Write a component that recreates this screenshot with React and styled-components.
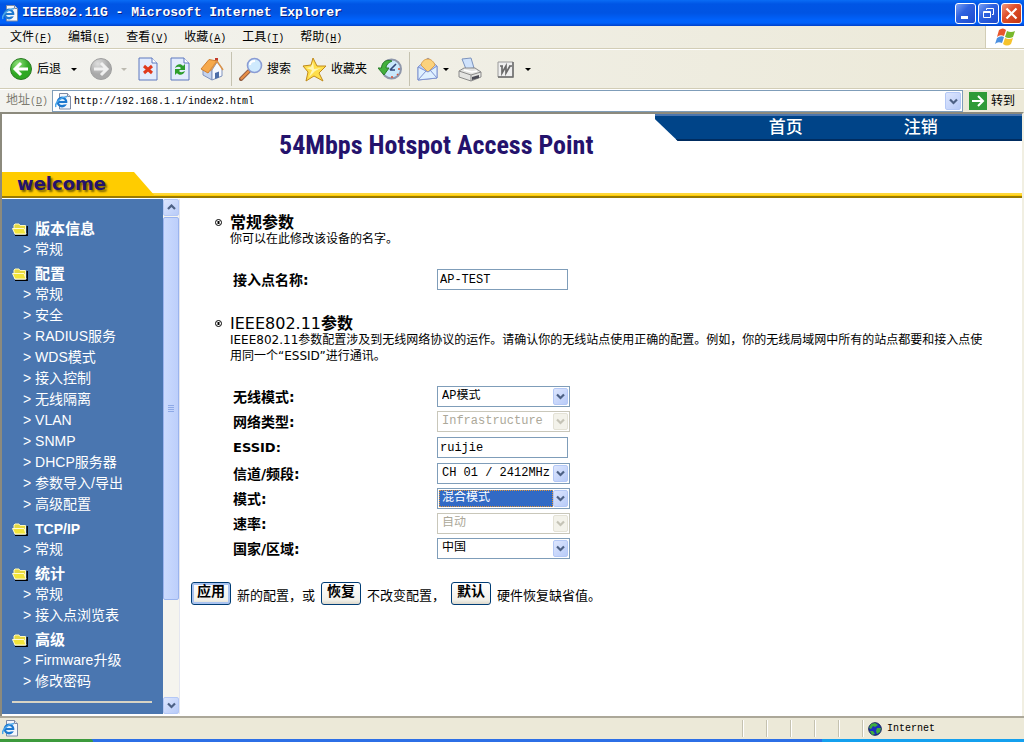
import React, { useState } from 'react';
import styled, { createGlobalStyle, css } from 'styled-components';

const GlobalStyle = createGlobalStyle`
  * {
    box-sizing: border-box;
  }

  body {
    margin: 0;
    background: #ece9d8;
    color: #000;
    font-family: 'DejaVu Sans', 'Noto Sans CJK SC', sans-serif;
    font-size: 12px;
  }

  button, input, select {
    margin: 0;
    font-family: inherit;
  }
`;

const Window = styled.div`
  display: flex;
  flex-direction: column;
  min-height: 100vh;
`;

/* ---------- title bar ---------- */

const TitleBar = styled.header`
  display: flex;
  align-items: center;
  height: 26px;
  padding: 0 2px;
  gap: 3px;
  background: linear-gradient(#0a6cf5 0, #0055e5 4px, #0054e3 13px, #0062fc 20px, #0061fa 23px, #0040c8 26px);
`;

const Title = styled.h1`
  flex: 1;
  margin: 0;
  color: #fff;
  font: bold 13px/24px 'Liberation Mono', monospace;
  text-shadow: 1px 1px 0 #0a1f83;
  white-space: nowrap;
`;

const WindowButtons = styled.div`
  display: flex;
  gap: 2px;
`;

const WindowButton = styled.button`
  display: flex;
  align-items: center;
  justify-content: center;
  width: 21px;
  height: 21px;
  padding: 0;
  border: 1px solid #fff;
  border-radius: 3px;
  background: ${({ $close }) =>
    $close
      ? 'linear-gradient(135deg, #ee9a80, #e0502c 40%, #c23612)'
      : 'linear-gradient(135deg, #7ba0f4, #2f62e0 40%, #1d4bce)'};
`;

/* ---------- menu and tool bars ---------- */

const MenuBar = styled.nav`
  display: flex;
  height: 23px;
  border-bottom: 1px solid #d2cdb6;
  background: linear-gradient(90deg, #f3f3ef, #ece9d8);
`;

const MenuList = styled.div`
  display: flex;
  flex: 1;
  align-items: center;
  gap: 16px;
  padding: 2px 10px 0;
`;

const MenuItem = styled.button`
  padding: 0;
  border: 0;
  background: none;
  color: #000;
  font: 12px/18px 'Liberation Mono', 'Noto Sans CJK SC', monospace;
  white-space: nowrap;
`;

const Mnemonic = styled.span`
  font-size: 10px;
`;

const Throbber = styled.div`
  display: flex;
  align-items: center;
  justify-content: center;
  width: 39px;
  border-left: 1px solid #d2cdb6;
  background: #fff;
`;

const ToolBar = styled.div`
  display: flex;
  align-items: center;
  height: 40px;
  padding: 0 9px;
  border-top: 1px solid #fff;
  border-bottom: 1px solid #d2cdb6;
  background: linear-gradient(90deg, #f3f3ef, #ece9d8);
`;

const ToolButton = styled.button`
  display: flex;
  flex: none;
  align-items: center;
  gap: 4px;
  width: ${({ $width }) => $width}px;
  padding: 0;
  border: 0;
  background: none;
  color: #000;
  font-size: 12px;
  line-height: 18px;
  white-space: nowrap;
`;

const Divider = styled.span`
  width: 1px;
  height: 34px;
  margin-right: 7px;
  background: #c5c2b0;
`;

const DropMark = styled.span`
  margin-left: ${({ $gap }) => $gap || 0}px;
  border: 3px solid transparent;
  border-bottom-width: 0;
  border-top-color: ${({ $muted }) => ($muted ? '#bcbab0' : '#000')};
`;

const AddressBar = styled.form`
  display: flex;
  align-items: center;
  height: 23px;
  padding-left: 6px;
  border-top: 1px solid #fff;
  background: linear-gradient(90deg, #f3f3ef, #ece9d8);
`;

const AddressLabel = styled.label`
  width: 46px;
  color: #7d7b70;
  font: 12px/18px 'Liberation Mono', 'Noto Sans CJK SC', monospace;
  white-space: nowrap;
`;

const AddressBox = styled.div`
  display: flex;
  flex: 1;
  align-items: center;
  height: 22px;
  padding: 1px 1px 1px 2px;
  gap: 2px;
  border: 1px solid #7f9db9;
  background: #fff;
`;

const AddressInput = styled.input`
  flex: 1;
  min-width: 0;
  padding: 2px 0 0;
  border: 0;
  outline: 0;
  background: none;
  font: 10px/16px 'Liberation Mono', monospace;
`;

const GoButton = styled.button`
  display: flex;
  align-items: center;
  gap: 4px;
  width: 61px;
  padding: 0 0 0 6px;
  border: 0;
  background: none;
  color: #000;
  font-size: 12px;
  line-height: 18px;
  white-space: nowrap;
`;

/* ---------- page ---------- */

const Page = styled.div`
  display: flex;
  flex: 1;
  flex-direction: column;
  min-height: 0;
  border: solid #8c8a7d;
  border-width: 2px 0 0 2px;
  border-right: 2px solid #f1efe2;
  background: #fff;
`;

const Banner = styled.header`
  display: flex;
  flex-wrap: wrap;
  align-items: flex-start;
  height: 84px;
  background: linear-gradient(#ffd83c 0, #ffd83c 2px, #fc0 2px, #fc0 3px, #997a00 3px) bottom / 100% 5px no-repeat;
`;

const BannerTitle = styled.h2`
  flex: 1;
  margin: 0;
  padding: 15px 0 0 277px;
  color: #24126c;
  font: bold 26px/32px 'Liberation Sans Narrow', 'Roboto Condensed', 'Liberation Sans', sans-serif;
  white-space: nowrap;
`;

const TopNav = styled.nav`
  display: flex;
  flex: 0 0 36%;
  gap: 101px;
  height: 27px;
  padding-left: 114px;
  border-top: 2px solid #4a76b0;
  border-bottom: 2px solid #002c60;
  background: #048;
  clip-path: polygon(0 0, 100% 0, 100% 100%, 23px 100%, 0 5px);
`;

const TopLink = styled.a`
  color: #fff;
  font-size: 17px;
  font-weight: 500;
  line-height: 22px;
  text-decoration: none;
`;

const WelcomeTab = styled.div`
  flex: 0 0 153px;
  align-self: flex-end;
  height: 24px;
  margin-bottom: 2px;
  padding-left: 15px;
  background: #fc0;
  color: #24126c;
  font: bold 18px/24px 'DejaVu Sans', sans-serif;
  text-shadow: 2px 2px 2px #7a6200;
  clip-path: polygon(0 0, 132px 0, 100% 100%, 0 100%);
`;

const Columns = styled.div`
  display: flex;
  flex: 1;
  min-height: 0;
  padding: 1px 0 2px;
`;

const SideBar = styled.nav`
  width: 161px;
  padding: 16px 11px 11px 10px;
  overflow: hidden;
  background: #4a76b0;
  color: #fff;
  font-family: 'Liberation Sans', 'Noto Sans CJK SC', sans-serif;
`;

const SideHeading = styled.h3`
  display: flex;
  align-items: center;
  gap: 7px;
  height: 20px;
  margin: 4px 0 0;
  font-size: ${({ $latin }) => ($latin ? 14 : 15)}px;
  line-height: 20px;
`;

const SideList = styled.ul`
  margin: 0;
  padding: 0;
  list-style: none;
`;

const SideItem = styled.li`
  height: 21px;
  padding-left: 11px;
  font-size: 14px;
  line-height: 21px;
  white-space: nowrap;
`;

const SideLink = styled.a`
  color: #fff;
  text-decoration: none;
`;

const SideRule = styled.hr`
  height: 2px;
  margin: 9px 0 0;
  border: 0;
  background: #d8d4c4;
`;

const ScrollBar = styled.div`
  display: flex;
  flex-direction: column;
  width: 17px;
  border-right: 1px solid #e4e6f0;
  background: #f5f4ee;
`;

const ScrollTrack = styled.div`
  display: flex;
  flex: 1;
  flex-direction: column;
  padding: 1px 0;
`;

const ScrollThumb = styled.div`
  display: flex;
  flex: 0 0 80%;
  align-items: center;
  justify-content: center;
  border: 1px solid #9bb4ee;
  border-radius: 2px;
  background: linear-gradient(90deg, #cbdafd, #bdcffb);
`;

const ArrowCell = styled.button`
  display: flex;
  flex: none;
  align-items: center;
  justify-content: center;
  width: ${({ $wide }) => ($wide ? 16 : 15)}px;
  height: ${({ $height }) => $height || 17}px;
  padding: 0;
  border: 1px solid ${({ disabled }) => (disabled ? '#e4e2d6' : '#b4c8f6')};
  border-radius: 2px;
  background: ${({ disabled }) => (disabled ? '#f3f2ea' : 'linear-gradient(135deg, #dde6fe, #b8cbf8)')};
  color: ${({ disabled }) => (disabled ? '#c5c3b6' : '#4d6185')};
`;

/* ---------- settings form ---------- */

const Settings = styled.form`
  flex: 1;
  min-width: 0;
  padding: 15px 32px 0 11px;
`;

const Section = styled.section`
  padding-left: 39px;
`;

const SectionTitle = styled.h3`
  display: flex;
  align-items: center;
  gap: 8px;
  margin: 0 0 0 -15px;
  font-size: 16px;
  font-weight: ${({ $regular }) => ($regular ? 400 : 700)};
  line-height: 17px;
`;

const Note = styled.p`
  margin: 0;
  font-size: 12px;
  line-height: 16px;
`;

const Fields = styled.div`
  padding: ${({ $top }) => $top}px 0 ${({ $bottom }) => $bottom}px 3px;
`;

const Field = styled.div`
  display: flex;
  align-items: center;
  height: ${({ $tall }) => ($tall ? 27 : 25)}px;
`;

const FieldLabel = styled.label`
  width: 204px;
  font-size: ${({ $latin }) => ($latin ? 13 : 14)}px;
  font-weight: 700;
  line-height: 20px;
`;

const controlFont = css`
  font: 12px/15px 'Liberation Mono', 'Noto Sans CJK SC', monospace;
`;

const TextBox = styled.input`
  width: 131px;
  height: 21px;
  padding: 0 2px;
  border: 1px solid #7f9db9;
  background: #fff;
  ${controlFont}
`;

const SelectFrame = styled.div`
  display: flex;
  align-items: center;
  width: 133px;
  height: 21px;
  padding: 1px;
  border: 1px solid ${({ $disabled }) => ($disabled ? '#c9c7ba' : '#7f9db9')};
  background: #fff;
`;

const SelectBox = styled.select`
  flex: 1;
  min-width: 0;
  height: 17px;
  padding: 0 0 0 3px;
  appearance: none;
  border: 0;
  border-radius: 0;
  outline: 0;
  background: ${({ $active }) => ($active ? '#316ac5' : '#fff')};
  color: ${({ $active }) => ($active ? '#fff' : '#000')};
  ${controlFont}

  ${({ $active }) => $active && css`
    outline: 1px dotted #e0953a;
    outline-offset: -1px;
  `}

  &:disabled {
    color: #aca899;
    opacity: 1;
  }
`;

const Actions = styled.div`
  display: flex;
  align-items: center;
  gap: 6px;
  font-size: 13px;
  line-height: 20px;
  white-space: nowrap;
`;

const ActionText = styled.span`
  padding-top: 6px;
`;

const ActionButton = styled.button`
  width: 40px;
  height: 23px;
  padding: 0 0 4px;
  border: 1px solid #003c74;
  border-radius: 3px;
  background: linear-gradient(#fff, #f2f1ea 80%, #dcd8cc);
  box-shadow: ${({ $primary }) => ($primary ? 'inset 0 0 0 2px #a9c3f0' : 'none')};
  color: #000;
  font-size: 14px;
  font-weight: 700;
  line-height: 16px;
`;

/* ---------- status bar ---------- */

const StatusBar = styled.footer`
  display: flex;
  align-items: center;
  height: 23px;
  border-top: 2px solid #aca899;
  background: #ece9d8;
`;

const StatusText = styled.div`
  flex: 1;
  padding-left: 2px;
  line-height: 0;
`;

const StatusCell = styled.div`
  display: flex;
  align-items: center;
  gap: 5px;
  width: ${({ $width }) => $width || 24}px;
  height: 17px;
  padding-left: 5px;
  border-left: 1px solid #c5c2b0;
  box-shadow: inset 1px 0 0 #fff;
  font: 10px/16px 'Liberation Mono', monospace;
`;

const TaskBar = styled.div`
  display: flex;
  height: 3px;
  background: #2c6fe6;
`;

const TaskStart = styled.div`
  width: 93px;
  border-radius: 0 3px 0 0;
  background: #3c9a3c;
`;

const TaskTray = styled.div`
  flex: 0 0 202px;
  margin-left: auto;
  background: #14a0ee;
`;

/* ---------- drawings ---------- */

const IeIcon = () => (
  <svg width="17" height="17" viewBox="0 0 17 17">
    <path d="M4.500 .5h8l3 3v12.500h-11z" fill="#f4f6fb" stroke="#7d8aa5" />
    <path d="M12.500 .5v3h3" fill="#dce3ef" stroke="#7d8aa5" />
    <circle cx="7" cy="9" r="4.200" fill="#e6f3fd" stroke="#1e78cf" strokeWidth="2.400" />
    <path d="M4 9h7" stroke="#1e78cf" strokeWidth="2" />
    <path d="M9 10.700h4" stroke="#f4f6fb" strokeWidth="1.400" />
    <path d="M1 14C-1 10 6 4 12 3.500" fill="none" stroke="#4aa6ea" strokeWidth="1.500" />
  </svg>
);

const Chevron = ({ up }) => (
  <svg width="9" height="7" viewBox="0 0 9 7">
    <path d={up ? 'M1 5l3.500-3.500L8 5' : 'M1 1.500L4.500 5 8 1.500'} fill="none" stroke="currentColor" strokeWidth="2.200" />
  </svg>
);

const RoundArrow = ({ muted }) => (
  <svg width="24" height="24" viewBox="0 0 24 24">
    <defs>
      <radialGradient id={muted ? 'fwd' : 'back'} cx="35%" cy="25%">
        <stop offset="0" stopColor={muted ? '#dedede' : '#8fe07a'} />
        <stop offset="1" stopColor={muted ? '#a9a9a9' : '#2fa824'} />
      </radialGradient>
    </defs>
    <circle cx="12" cy="12" r="10.500" fill={`url(#${muted ? 'fwd' : 'back'})`} stroke={muted ? '#a0a0a0' : '#2c7a25'} />
    <path
      d={muted ? 'M5 12h12M12 6l6 6-6 6' : 'M19 12H7M12 6l-6 6 6 6'}
      fill="none"
      stroke={muted ? '#f0f0f0' : '#fff'}
      strokeWidth="3"
    />
  </svg>
);

const SheetIcon = ({ children }) => (
  <svg width="20" height="24" viewBox="0 0 20 24">
    <path d="M1 1h13l5 5v17H1z" fill="#e3ecfd" stroke="#5f78be" />
    <path d="M14 1v5h5" fill="#fff" stroke="#5f78be" />
    {children}
  </svg>
);

const HomeIcon = () => (
  <svg width="24" height="24" viewBox="0 0 24 24">
    <path d="M15 1h3v6h-3z" fill="#c23a2a" />
    <path d="M3 12v6l9 5V13l-5-3z" fill="#c4d3ee" stroke="#8093bd" />
    <path d="M12 13v10l10-4v-8l-5-6z" fill="#f6f9ff" stroke="#8093bd" />
    <path d="M1 12L9 2.500 17 4l-6 8-3 4z" fill="#f6a94c" stroke="#d07f30" />
    <path d="M10 14l7-10 6 9" fill="none" stroke="#dc9348" strokeWidth="1.500" />
    <path d="M15 16l4-1.500v6L15 22z" fill="#4d6ea8" />
  </svg>
);

const SearchIcon = () => (
  <svg width="24" height="24" viewBox="0 0 24 24">
    <path d="M2 22l8-8" stroke="#8f5a40" strokeWidth="4" strokeLinecap="round" />
    <path d="M2.500 21.500l7-7" stroke="#e88f45" strokeWidth="2.400" strokeLinecap="round" />
    <circle cx="15.500" cy="8.500" r="7" fill="#cfeafd" stroke="#8a9cd4" strokeWidth="1.600" />
    <path d="M11 8c0-3 2-4 5-4" fill="none" stroke="#fff" strokeWidth="2" />
  </svg>
);

const StarIcon = () => (
  <svg width="25" height="25" viewBox="0 0 25 25">
    <path d="M11 1l4 8 9 0-7 7 4 8-9-5-8 5 2-9-5-6 8-1z" fill="#ffdf4a" stroke="#c08a1c" strokeLinejoin="round" />
    <path d="M11 5l1 7 7-1-6 3-6 6 3-7-6-2 5-1z" fill="#fff6b4" />
  </svg>
);

const HistoryIcon = () => (
  <svg width="24" height="24" viewBox="0 0 24 24">
    <circle cx="13.500" cy="12" r="9.500" fill="#c9e8fb" stroke="#8f97ab" strokeWidth="2" />
    <path d="M12 13l6-6M12 13h5" stroke="#33487a" strokeWidth="1.600" />
    <path d="M20 12h2M14 19v2M19 17l1 1" stroke="#e05030" strokeWidth="1.500" />
    <path d="M14 4C8 2 4 5 3.500 11H0l6 7 5-7H8c0-3 2-5 6-7z" fill="#43b13c" stroke="#2b7f2a" />
  </svg>
);

const MailIcon = () => (
  <svg width="22" height="24" viewBox="0 0 22 24">
    <path d="M1 10L11 1l9 8v12L1 23z" fill="#b7cdf5" stroke="#7f93d0" />
    <path d="M4 8c1-4 4-6 7-6s6 3 7 6l-7 7z" fill="#fbd27c" stroke="#dfa24a" />
    <path d="M1 10l10 5 9-6v12L1 23z" fill="#dff0ff" stroke="#7f93d0" />
    <path d="M1 23l8-9M20 21l-7-8" stroke="#7f93d0" />
  </svg>
);

const PrinterIcon = () => (
  <svg width="24" height="25" viewBox="0 0 24 25">
    <path d="M4 2l9-1 3 10-8 1z" fill="#cfe2fb" stroke="#7c93bd" />
    <path d="M1 14l5-3h11l6 4v5l-10 4-12-4z" fill="#e4e4e2" stroke="#8a8a8a" />
    <path d="M1 14l12 4 10-3M13 18v6" fill="none" stroke="#8a8a8a" />
    <path d="M14 20l7-2v3l-7 2z" fill="#4d4d57" />
    <path d="M6 13l8 2 5-1" fill="none" stroke="#fff" strokeWidth="1.500" />
  </svg>
);

const EditIcon = () => (
  <svg width="17" height="17" viewBox="0 0 17 17">
    <path d="M1 1h15v15H1z" fill="#efefef" stroke="#9a9a9a" />
    <path d="M16 1v15H1" fill="none" stroke="#6c6c6c" strokeWidth="1.500" />
    <path d="M3 5h3M5 5l0 7 4-7 0 7 4-7M12 5h3" fill="none" stroke="#6a6a6a" strokeWidth="1.700" />
  </svg>
);

const FolderIcon = () => (
  <svg width="16" height="13" viewBox="0 0 16 13">
    <path d="M3 12.300h12.200V3" fill="none" stroke="#000" strokeWidth="1.400" />
    <path d="M2 5V2l1-1h4l1 1.500h5.500V11H3z" fill="#e6d940" stroke="#fff9c0" />
    <path d="M.5 5.500h11.500l2 5.500H3z" fill="#f2e53a" stroke="#fffbd0" />
  </svg>
);

const Bullet = () => (
  <svg width="7" height="7" viewBox="0 0 7 7">
    <circle cx="3.500" cy="3.500" r="3" fill="#fff" stroke="#000" />
    <rect x="2.500" y="2" width="2" height="3" fill="#000" />
  </svg>
);

const FlagIcon = () => (
  <svg width="21" height="19" viewBox="0 0 21 19">
    <path d="M4 2q4-3 7 0L9 8q-4-2-7 1z" fill="#e8562c" />
    <path d="M12 3q4 2 8 0l-2 6q-4 2-8 0z" fill="#78b82c" />
    <path d="M2 10q4-3 7-1l-2 6q-4-2-7 1z" fill="#4a8fe0" />
    <path d="M10 10q4 2 8 0l-2 6q-4 3-8 0z" fill="#f6c32c" />
  </svg>
);

const GlobeIcon = () => (
  <svg width="14" height="14" viewBox="0 0 14 14">
    <circle cx="7" cy="7" r="6.300" fill="#1c2fbe" stroke="#102050" />
    <path d="M3 2l4-1 3 2-3 2-2-1-2 3-2-1zM9 6l4 0-1 4-3 2-1-3zM2 9l3 0 2 3-3 1z" fill="#3fae3c" />
  </svg>
);

/* ---------- data ---------- */

const menus = [
  ['文件', 'F'],
  ['编辑', 'E'],
  ['查看', 'V'],
  ['收藏', 'A'],
  ['工具', 'T'],
  ['帮助', 'H'],
];

const sideMenu = [
  { title: '版本信息', items: ['常规'] },
  {
    title: '配置',
    items: [
      '常规', '安全', 'RADIUS服务', 'WDS模式', '接入控制', '无线隔离',
      'VLAN', 'SNMP', 'DHCP服务器', '参数导入/导出', '高级配置',
    ],
  },
  { title: 'TCP/IP', latin: true, items: ['常规'] },
  { title: '统计', items: ['常规', '接入点浏览表'] },
  { title: '高级', items: ['Firmware升级', '修改密码'] },
];

const fields = [
  { id: 'wireless', label: '无线模式:', options: ['AP模式'] },
  { id: 'network', label: '网络类型:', options: ['Infrastructure'], disabled: true },
  { id: 'essid', label: 'ESSID:', latin: true },
  { id: 'channel', label: '信道/频段:', options: ['CH 01 / 2412MHz'] },
  { id: 'mode', label: '模式:', options: ['混合模式'], active: true },
  { id: 'rate', label: '速率:', options: ['自动'], disabled: true },
  { id: 'region', label: '国家/区域:', options: ['中国'] },
];

const App = () => {
  const [address, setAddress] = useState('http://192.168.1.1/index2.html');
  const [name, setName] = useState('AP-TEST');
  const [essid, setEssid] = useState('ruijie');

  const handleSubmit = (e) => {
    e.preventDefault();
  };

  return (
    <Window>
      <GlobalStyle />
      <TitleBar>
        <IeIcon />
        <Title>IEEE802.11G - Microsoft Internet Explorer</Title>
        <WindowButtons>
          <WindowButton aria-label="最小化">
            <svg width="15" height="15"><path d="M3 11.500h7" stroke="#fff" strokeWidth="3" /></svg>
          </WindowButton>
          <WindowButton aria-label="还原">
            <svg width="15" height="15">
              <path d="M5.500 4V2.500h7v6H11" fill="none" stroke="#fff" />
              <path d="M2.500 5.500h7v6h-7zM2 6.500h8" fill="none" stroke="#fff" />
            </svg>
          </WindowButton>
          <WindowButton $close aria-label="关闭">
            <svg width="15" height="15"><path d="M2.500 2.500l10 10M12.500 2.500l-10 10" stroke="#fff" strokeWidth="2.200" /></svg>
          </WindowButton>
        </WindowButtons>
      </TitleBar>

      <MenuBar>
        <MenuList>
          {menus.map(([label, key]) => (
            <MenuItem key={key}>
              {label}
              <Mnemonic>(<u>{key}</u>)</Mnemonic>
            </MenuItem>
          ))}
        </MenuList>
        <Throbber><FlagIcon /></Throbber>
      </MenuBar>

      <ToolBar>
        <ToolButton $width={80}><RoundArrow />后退<DropMark $gap={6} /></ToolButton>
        <ToolButton $width={49} aria-label="前进"><RoundArrow muted /><DropMark $gap={4} $muted /></ToolButton>
        <ToolButton $width={32} aria-label="停止">
          <SheetIcon><path d="M6 9l8 7M14 9l-8 7" stroke="#e0391c" strokeWidth="3" /></SheetIcon>
        </ToolButton>
        <ToolButton $width={30} aria-label="刷新">
          <SheetIcon>
            <path d="M5 11c1-4 6-5 8-2l2-2v6h-6l2-2c-2-2-4-1-6 0z" fill="#2d9e2d" />
            <path d="M15 14c-1 4-6 5-8 2l-2 2v-6h6l-2 2c2 2 4 1 6 0z" fill="#2d9e2d" />
          </SheetIcon>
        </ToolButton>
        <ToolButton $width={31} aria-label="主页"><HomeIcon /></ToolButton>
        <Divider />
        <ToolButton $width={63}><SearchIcon />搜索</ToolButton>
        <ToolButton $width={76}><StarIcon />收藏夹</ToolButton>
        <ToolButton $width={31} aria-label="历史"><HistoryIcon /></ToolButton>
        <Divider />
        <ToolButton $width={41} aria-label="邮件"><MailIcon /><DropMark /></ToolButton>
        <ToolButton $width={39} aria-label="打印"><PrinterIcon /></ToolButton>
        <ToolButton $width={40} aria-label="编辑"><EditIcon /><DropMark $gap={7} /></ToolButton>
      </ToolBar>

      <AddressBar onSubmit={handleSubmit}>
        <AddressLabel htmlFor="address">地址<Mnemonic>(<u>D</u>)</Mnemonic></AddressLabel>
        <AddressBox>
          <IeIcon />
          <AddressInput id="address" value={address} onChange={(e) => setAddress(e.target.value)} />
          <ArrowCell type="button" $wide $height={18} aria-label="地址列表"><Chevron /></ArrowCell>
        </AddressBox>
        <GoButton type="submit">
          <svg width="18" height="18">
            <rect width="18" height="18" fill="#2f9a37" />
            <path d="M3 9h11M9 4l5 5-5 5" fill="none" stroke="#fff" strokeWidth="2" />
          </svg>
          转到
        </GoButton>
      </AddressBar>

      <Page>
        <Banner>
          <BannerTitle>54Mbps Hotspot Access Point</BannerTitle>
          <TopNav>
            <TopLink href="#home">首页</TopLink>
            <TopLink href="#logout">注销</TopLink>
          </TopNav>
          <WelcomeTab>welcome</WelcomeTab>
        </Banner>

        <Columns>
          <SideBar>
            {sideMenu.map((group) => (
              <React.Fragment key={group.title}>
                <SideHeading $latin={group.latin}><FolderIcon />{group.title}</SideHeading>
                <SideList>
                  {group.items.map((item) => (
                    <SideItem key={item}>&gt; <SideLink href="#item">{item}</SideLink></SideItem>
                  ))}
                </SideList>
              </React.Fragment>
            ))}
            <SideRule />
          </SideBar>
          <ScrollBar>
            <ArrowCell $wide aria-label="向上"><Chevron up /></ArrowCell>
            <ScrollTrack>
              <ScrollThumb>
                <svg width="7" height="8"><path d="M0 .5h6M0 2.500h6M0 4.500h6M0 6.500h6" stroke="#8ea9e6" /></svg>
              </ScrollThumb>
            </ScrollTrack>
            <ArrowCell $wide aria-label="向下"><Chevron /></ArrowCell>
          </ScrollBar>

          <Settings onSubmit={handleSubmit}>
            <Section>
              <SectionTitle><Bullet />常规参数</SectionTitle>
              <Note>你可以在此修改该设备的名字。</Note>
              <Fields $top={19} $bottom={22}>
                <Field $tall>
                  <FieldLabel htmlFor="name">接入点名称:</FieldLabel>
                  <TextBox id="name" value={name} onChange={(e) => setName(e.target.value)} />
                </Field>
              </Fields>
            </Section>

            <Section>
              <SectionTitle $regular><Bullet /><span>IEEE802.11<b>参数</b></span></SectionTitle>
              <Note>
                IEEE802.11参数配置涉及到无线网络协议的运作。请确认你的无线站点使用正确的配置。例如，你的无线局域网中所有的站点都要和接入点使用同一个“ESSID”进行通讯。
              </Note>
              <Fields $top={20} $bottom={19}>
                {fields.map((field) => (
                  <Field key={field.id} $tall={!field.options}>
                    <FieldLabel htmlFor={field.id} $latin={field.latin}>{field.label}</FieldLabel>
                    {field.options ? (
                      <SelectFrame $disabled={field.disabled}>
                        <SelectBox id={field.id} disabled={field.disabled} $active={field.active}>
                          {field.options.map((option) => <option key={option}>{option}</option>)}
                        </SelectBox>
                        <ArrowCell type="button" tabIndex={-1} disabled={field.disabled} aria-hidden="true">
                          <Chevron />
                        </ArrowCell>
                      </SelectFrame>
                    ) : (
                      <TextBox id={field.id} value={essid} onChange={(e) => setEssid(e.target.value)} />
                    )}
                  </Field>
                ))}
              </Fields>
            </Section>

            <Actions>
              <ActionButton type="submit" $primary>应用</ActionButton>
              <ActionText>新的配置，或</ActionText>
              <ActionButton type="reset">恢复</ActionButton>
              <ActionText>不改变配置，</ActionText>
              <ActionButton type="button">默认</ActionButton>
              <ActionText>硬件恢复缺省值。</ActionText>
            </Actions>
          </Settings>
        </Columns>
      </Page>

      <StatusBar>
        <StatusText><IeIcon /></StatusText>
        <StatusCell />
        <StatusCell />
        <StatusCell />
        <StatusCell />
        <StatusCell />
        <StatusCell $width={162}><GlobeIcon />Internet</StatusCell>
      </StatusBar>
      <TaskBar>
        <TaskStart />
        <TaskTray />
      </TaskBar>
    </Window>
  );
};

export default App;
